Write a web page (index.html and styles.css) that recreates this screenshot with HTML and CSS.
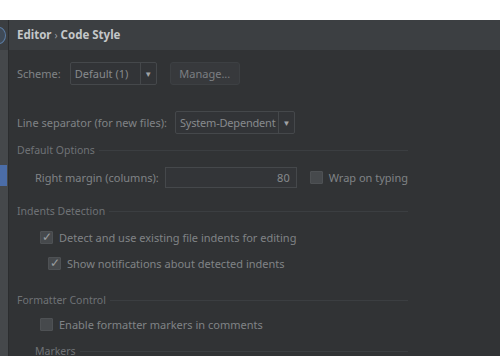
FILE: index.html
```html
<!DOCTYPE html>
<html lang="en">
  <head>
    <meta charset="UTF-8" />
    <title>Code Style</title>
    <link rel="stylesheet" href="styles.css">
  </head>
  <body>
    <div class="top-gap"></div>
    <div class="window">
      <div class="side">
        <div class="side-top"><span class="side-dot"></span></div>
        <div class="side-sel"></div>
      </div>
      <div class="panel">
        <div class="crumb">Editor <span class="sep">›</span> Code Style</div>

        <div class="body">
          <div class="row scheme-row">
            <span class="label">Scheme:</span>
            <div class="combo scheme-combo">
              <span class="combo-text">Default (1)</span>
              <span class="combo-arrow">▼</span>
            </div>
            <div class="btn">Manage...</div>
          </div>

          <div class="row sep-row">
            <span class="label">Line separator (for new files):</span>
            <div class="combo sep-combo">
              <span class="combo-text">System-Dependent</span>
              <span class="combo-arrow">▼</span>
            </div>
          </div>

          <div class="group g-default"><span>Default Options</span></div>
          <div class="row margin-row">
            <span class="label">Right margin (columns):</span>
            <div class="field">80</div>
            <span class="check"></span>
            <span class="label">Wrap on typing</span>
          </div>

          <div class="group g-indents"><span>Indents Detection</span></div>
          <div class="row opt detect">
            <span class="check on">✓</span>
            <span class="label">Detect and use existing file indents for editing</span>
          </div>
          <div class="row opt notify">
            <span class="check on">✓</span>
            <span class="label">Show notifications about detected indents</span>
          </div>

          <div class="group g-formatter"><span>Formatter Control</span></div>
          <div class="row opt enable">
            <span class="check"></span>
            <span class="label">Enable formatter markers in comments</span>
          </div>
          <div class="group sub g-markers"><span>Markers</span></div>
        </div>
      </div>
    </div>
  </body>
</html>
```

FILE: styles.css
```css
html,
body {
  margin: 0;
  padding: 0;
  background-color: #fff;
}

body {
  font-family: "Noto Sans", "Open Sans", sans-serif;
  font-size: 11px;
  color: #808386;
  width: 500px;
  height: 356px;
  overflow: hidden;
  white-space: nowrap;
}

.top-gap {
  height: 20px;
  background-color: #fff;
}

.window {
  display: flex;
  height: 336px;
  background-color: #313335;
}

.side {
  width: 8px;
  flex-shrink: 0;
  background-color: #45484b;
  border-right: 1px solid #2b2d2f;
}

.side-top {
  height: 30px;
  background-color: #3b3e41;
  position: relative;
  overflow: hidden;
}

.side-dot {
  position: absolute;
  left: -8px;
  top: 7px;
  width: 12px;
  height: 15px;
  border-radius: 50%;
  border: 1px solid #5b7ca4;
  background-color: #3f4a57;
}

.side-sel {
  margin-top: 115px;
  height: 21px;
  width: 7px;
  background-color: #4b6da8;
}

.panel {
  flex: 1;
}

.crumb {
  height: 30px;
  line-height: 30px;
  padding-left: 8px;
  background-color: #3c3f42;
  color: #c4c7c9;
  font-weight: bold;
  font-size: 11.5px;
}

.crumb .sep {
  font-weight: normal;
  font-size: 10px;
  color: #9a9da0;
}

.body {
  padding-left: 8px;
  width: 391px;
}

.row {
  display: flex;
  align-items: center;
}

.row > * {
  flex-shrink: 0;
}

.scheme-row {
  margin-top: 12px;
  height: 23px;
}

.combo {
  display: flex;
  height: 21px;
  border: 1px solid #45484b;
  border-radius: 2px;
  background-color: #323437;
  color: #878a8d;
}

.combo-text {
  flex: 1;
  line-height: 21px;
  padding-left: 4px;
}

.combo-arrow {
  width: 15px;
  border-left: 1px solid #45484b;
  text-align: center;
  line-height: 21px;
  font-size: 8px;
  color: #a0a3a6;
}

.scheme-combo {
  width: 85px;
  margin-left: 9px;
}

.btn {
  margin-left: 13px;
  width: 68px;
  height: 21px;
  line-height: 21px;
  text-align: center;
  border: 1px solid #3d4043;
  border-radius: 3px;
  background-color: #37393c;
  color: #7c7f82;
}

.sep-row {
  margin-top: 27px;
  height: 21px;
}

.sep-combo {
  width: 118px;
  margin-left: 8px;
}

.sep-combo .combo-text {
  letter-spacing: -0.2px;
}

.group {
  display: flex;
  align-items: center;
  height: 16px;
  font-size: 10.5px;
  color: #6f7275;
}

.group::after {
  content: "";
  flex: 1;
  border-top: 1px solid #3b3e41;
  margin-left: 4px;
}

.g-default {
  margin-top: 9px;
}

.margin-row {
  margin-top: 9px;
  height: 21px;
  padding-left: 18px;
}

.field {
  width: 124px;
  height: 19px;
  line-height: 19px;
  margin-left: 6px;
  padding-right: 6px;
  text-align: right;
  border: 1px solid #45484b;
  background-color: #333538;
  color: #878a8d;
}

.margin-row .check {
  margin-left: 13px;
  margin-right: 6px;
}

.check {
  display: inline-block;
  width: 11px;
  height: 11px;
  border: 1px solid #4e5154;
  background-color: #46494c;
  border-radius: 1px;
  color: #9a9da0;
  font-size: 12px;
  line-height: 10px;
  text-align: center;
}

.g-indents {
  margin-top: 15px;
}

.opt {
  height: 18px;
  padding-left: 23px;
}

.opt .check {
  margin-right: 6px;
}

.detect {
  margin-top: 9px;
}

.notify {
  margin-top: 8px;
  padding-left: 31px;
}

.g-formatter {
  margin-top: 20px;
}

.enable {
  margin-top: 7px;
}

.g-markers {
  margin-top: 10px;
  padding-left: 18px;
}
```
